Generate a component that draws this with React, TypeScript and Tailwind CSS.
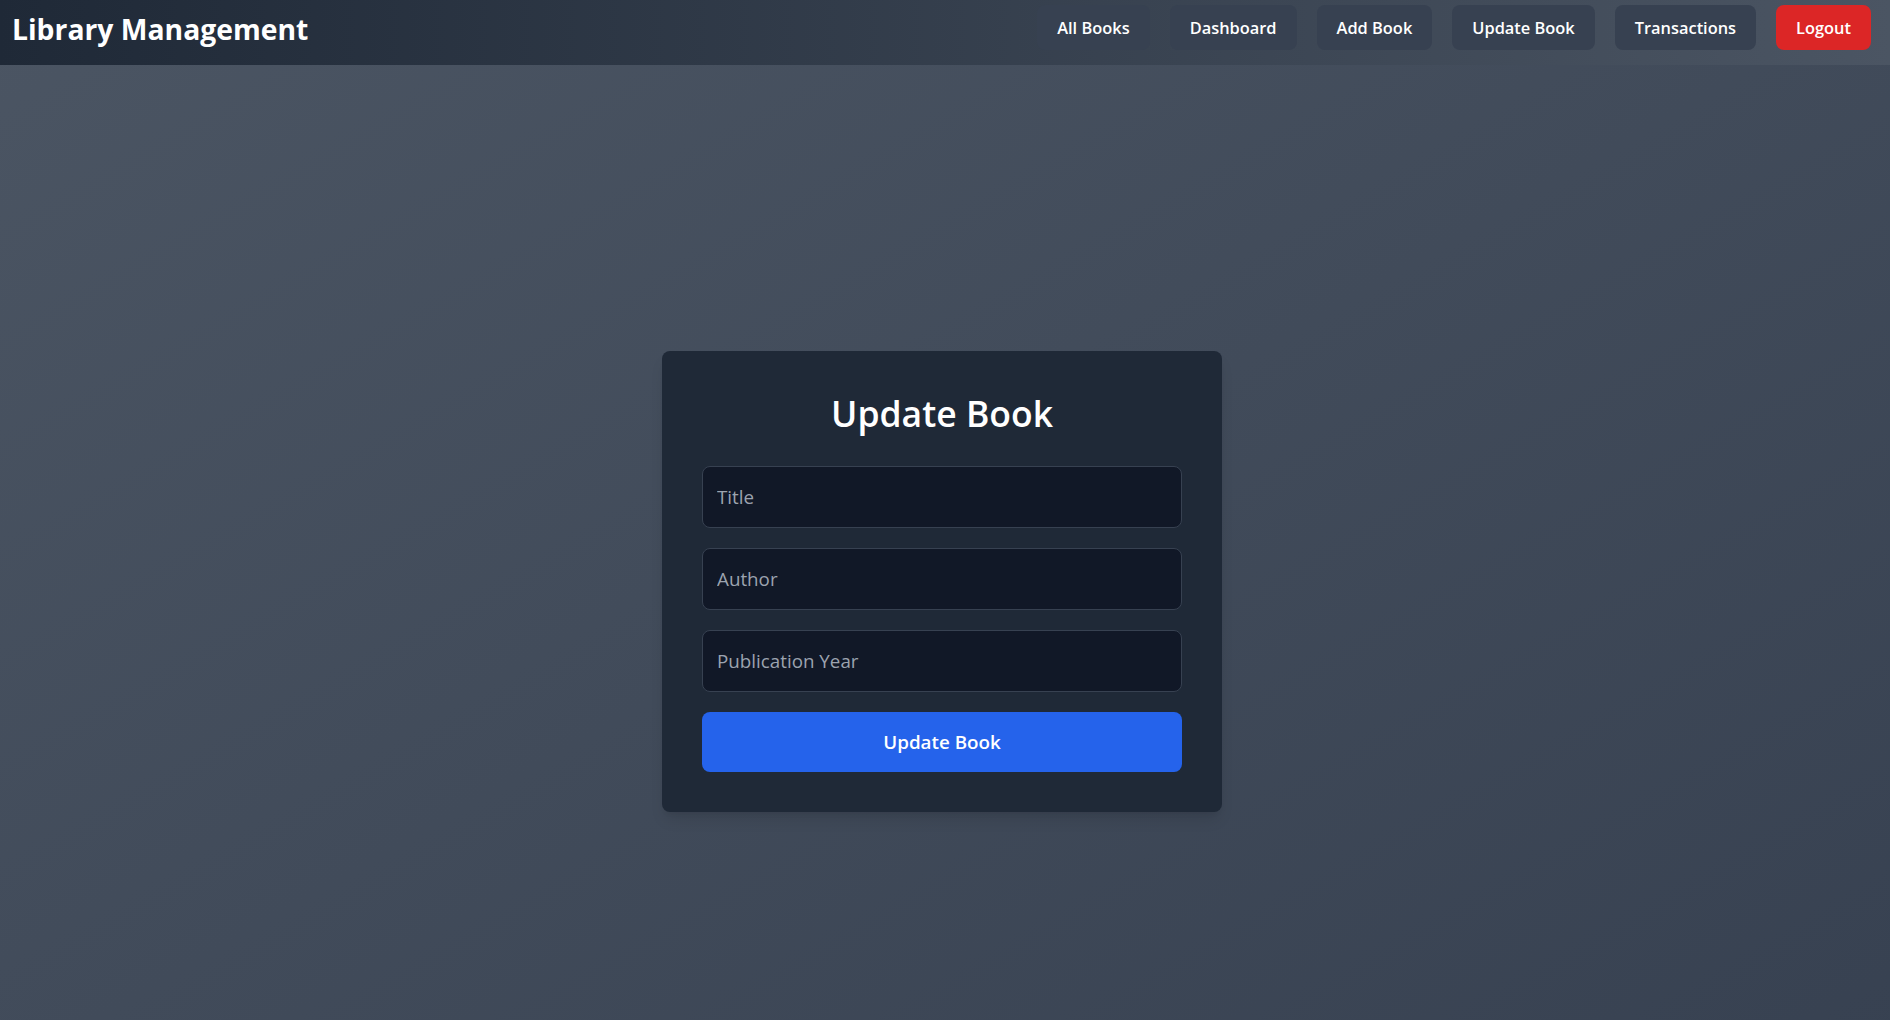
import React, { useState } from 'react';

const navItems = ['All Books', 'Dashboard', 'Add Book', 'Update Book', 'Transactions'];

function Header() {
  return (
    <header className="flex items-center justify-between bg-gradient-to-r from-[#1f2937] to-[#4b5563] pl-3 pr-[19px] pt-[5px] pb-[15px]">
      <h1 className="text-[28.3px] leading-9 font-bold text-white pt-0.5">Library Management</h1>
      <nav className="flex items-center gap-5">
        {navItems.map((item) => (
          <button
            key={item}
            className="h-[45px] px-5 pt-0.5 rounded-lg bg-[#374151] text-white text-[16.4px] font-semibold hover:bg-[#4b5563]"
          >
            {item}
          </button>
        ))}
        <button className="h-[45px] px-5 pt-0.5 rounded-lg bg-[#dc2626] text-white text-[16.4px] font-semibold hover:bg-[#b91c1c]">
          Logout
        </button>
      </nav>
    </header>
  );
}

export default function App() {
  const [title, setTitle] = useState('');
  const [author, setAuthor] = useState('');
  const [year, setYear] = useState('');

  const inputClass =
    'w-full py-4 pl-3.5 pr-4 text-[18.8px] leading-7 bg-[#111827] text-white border border-[#374151] rounded-lg placeholder-[#9ca3af] outline-none';

  return (
    <div className="min-h-screen font-['Open_Sans',sans-serif] bg-gradient-to-br from-[#4b5563] to-[#374151]">
      <Header />
      <main className="min-h-screen flex items-center justify-center pt-3 pr-1.5">
        <div className="w-[560px] bg-[#1f2937] rounded-lg shadow-lg p-10">
          <h2 className="text-[35.5px] leading-[44px] font-semibold text-white text-center mb-[31px]">
            Update Book
          </h2>
          <form className="flex flex-col gap-5" onSubmit={(e) => e.preventDefault()}>
            <input
              type="text"
              placeholder="Title"
              value={title}
              onChange={(e) => setTitle(e.target.value)}
              className={inputClass}
            />
            <input
              type="text"
              placeholder="Author"
              value={author}
              onChange={(e) => setAuthor(e.target.value)}
              className={inputClass}
            />
            <input
              type="number"
              placeholder="Publication Year"
              value={year}
              onChange={(e) => setYear(e.target.value)}
              className={inputClass}
            />
            <button
              type="submit"
              className="w-full p-4 text-[18.8px] leading-7 font-semibold bg-[#2563eb] text-white rounded-lg hover:bg-[#1d4ed8]"
            >
              Update Book
            </button>
          </form>
        </div>
      </main>
    </div>
  );
}
